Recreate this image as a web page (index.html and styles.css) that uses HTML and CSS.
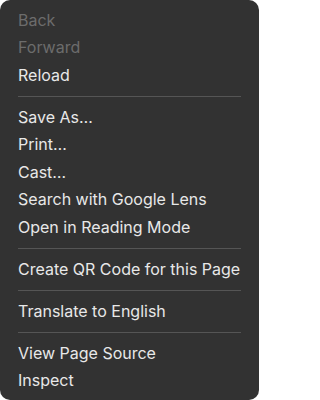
FILE: index.html
```html
<!DOCTYPE html>
<html lang="en">
<head>
<meta charset="utf-8">
<title>Context menu</title>
<link rel="stylesheet" href="styles.css">
</head>
<body>
<div class="menu" role="menu">
  <div class="item disabled" role="menuitem">Back</div>
  <div class="item disabled" role="menuitem">Forward</div>
  <div class="item" role="menuitem">Reload</div>
  <div class="sep" role="separator"></div>
  <div class="item" role="menuitem">Save As…</div>
  <div class="item" role="menuitem">Print…</div>
  <div class="item" role="menuitem">Cast…</div>
  <div class="item" role="menuitem">Search with Google Lens</div>
  <div class="item" role="menuitem">Open in Reading Mode</div>
  <div class="sep" role="separator"></div>
  <div class="item" role="menuitem">Create QR Code for this Page</div>
  <div class="sep" role="separator"></div>
  <div class="item" role="menuitem">Translate to English</div>
  <div class="sep" role="separator"></div>
  <div class="item" role="menuitem">View Page Source</div>
  <div class="item" role="menuitem">Inspect</div>
</div>
</body>
</html>
```
FILE: styles.css
```css
html, body {
  margin: 0;
  padding: 0;
  background: #ffffff;
}
.menu {
  box-sizing: border-box;
  width: 259px;
  height: 400px;
  background: #323232;
  border-radius: 10px;
  padding: 6.5px 0 0;
  display: flex;
  flex-direction: column;
  font-family: Inter, "Liberation Sans", sans-serif;
  font-size: 16px;
  color: #e8e8e8;
}
.item {
  height: 27.5px;
  line-height: 27.5px;
  padding: 0 18px;
  white-space: nowrap;
}
.item.disabled {
  color: #6c6c6c;
}
.sep {
  height: 1px;
  margin: 6.75px 18px;
  background: #555555;
}
```
